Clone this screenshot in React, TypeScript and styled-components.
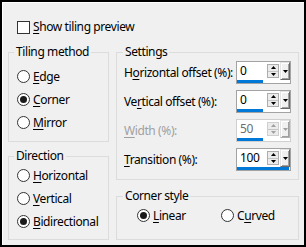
import React from 'react';
import styled, { createGlobalStyle } from 'styled-components';

const Global = createGlobalStyle`
  html, body { margin: 0; padding: 0; background: #f0f0f0; }
  #root { width: 306px; height: 247px; }
`;

const Window = styled.div`
  box-sizing: border-box;
  width: 306px;
  height: 247px;
  border: 2px solid #000;
  background: #f0f0f0;
  box-shadow: inset 1px 1px 0 #fff;
  padding: 17px 5px 0 6px;
  display: flex;
  flex-direction: column;
  gap: 9px;
  font-family: "Noto Sans", "Open Sans", sans-serif;
  font-size: 12px;
  line-height: 16px;
  letter-spacing: -0.4px;
  color: #000;
`;

const U = styled.span`
  text-decoration: underline;
  text-underline-offset: 2px;
  text-decoration-thickness: 1px;
`;

const CheckRow = styled.label`
  display: flex;
  align-items: center;
  gap: 3px;
  height: 16px;
  margin-left: 9px;
`;

const CheckBox = styled.span`
  box-sizing: border-box;
  width: 13px;
  height: 13px;
  border: 1px solid #333;
  background: #fff;
`;

const Columns = styled.div`
  display: flex;
  gap: 7px;
`;

const Column = styled.div<{ $w: number; $gap: number }>`
  width: ${(p) => p.$w}px;
  display: flex;
  flex-direction: column;
  gap: ${(p) => p.$gap}px;
`;

const Group = styled.fieldset<{ $h: number; $pt: number; $pl: number; $pr: number }>`
  box-sizing: border-box;
  margin: 0;
  min-width: 0;
  height: ${(p) => p.$h}px;
  border: 1px solid #dcdcdc;
  padding: ${(p) => p.$pt}px ${(p) => p.$pr}px 0 ${(p) => p.$pl}px;
  display: flex;
  flex-direction: column;
`;

const Legend = styled.legend`
  padding: 0 2px;
  line-height: 16px;
`;

const RadioRow = styled.label<{ $indent?: number; $w?: number }>`
  display: flex;
  align-items: center;
  gap: 3px;
  height: 23px;
  margin-left: ${(p) => p.$indent ?? 3}px;
  width: ${(p) => (p.$w ? `${p.$w}px` : 'auto')};
`;

const RadioCircle = styled.span<{ $checked?: boolean }>`
  box-sizing: border-box;
  width: 13px;
  height: 13px;
  border-radius: 50%;
  border: 1px solid #333;
  background: #fff;
  display: flex;
  align-items: center;
  justify-content: center;
  &::after {
    content: '';
    width: 7px;
    height: 7px;
    border-radius: 50%;
    background: #1a1a1a;
    display: ${(p) => (p.$checked ? 'block' : 'none')};
  }
`;

const OptionLine = styled.div`
  display: flex;
  align-items: center;
`;

const SettingRows = styled.div`
  display: flex;
  flex-direction: column;
  gap: 6px;
  margin-left: 1px;
`;

const SettingRow = styled.div`
  display: flex;
  align-items: center;
  justify-content: space-between;
  height: 23px;
`;

const SettingLabel = styled.span<{ $disabled?: boolean }>`
  color: ${(p) => (p.$disabled ? '#a0a0a0' : '#000')};
`;

const SpinField = styled.div<{ $disabled?: boolean }>`
  box-sizing: border-box;
  width: 55px;
  height: 23px;
  border: 1px solid ${(p) => (p.$disabled ? '#cfcfcf' : '#a3a3a3')};
  background: #fff;
  display: flex;
  flex-direction: column;
`;

const SpinTop = styled.div`
  display: flex;
  align-items: center;
  height: 18px;
`;

const SpinValue = styled.span<{ $disabled?: boolean }>`
  width: 30px;
  box-sizing: border-box;
  padding-left: 3px;
  color: ${(p) => (p.$disabled ? '#6d6d6d' : '#000')};
`;

const Arrows = styled.div<{ $disabled?: boolean }>`
  box-sizing: border-box;
  width: 12px;
  height: 14px;
  border: 1px solid ${(p) => (p.$disabled ? '#cfcfcf' : '#adadad')};
  background: #ececec;
  display: flex;
  flex-direction: column;
`;

const ArrowHalf = styled.div`
  flex: 1;
  display: flex;
  align-items: center;
  justify-content: center;
  & + & {
    border-top: 1px solid #c4c4c4;
  }
`;

const DropButton = styled.div<{ $disabled?: boolean }>`
  box-sizing: border-box;
  width: 10px;
  height: 18px;
  margin-left: 1px;
  background: #f0f0f0;
  border: 1px solid;
  border-color: #e3e3e3 ${(p) => (p.$disabled ? '#b0b0b0' : '#696969')}
    ${(p) => (p.$disabled ? '#b0b0b0' : '#696969')} #e3e3e3;
  box-shadow: inset 1px 1px 0 #fff, inset -1px -1px 0 #a0a0a0;
  display: flex;
  align-items: center;
  justify-content: center;
`;

const Track = styled.div`
  height: 3px;
  width: 52px;
`;

const Bar = styled.div`
  height: 100%;
  background: #0078d7;
`;

const Tri = ({ dir, color }: { dir: 'up' | 'down'; color: string }) => (
  <svg width="5" height="3" viewBox="0 0 5 3">
    <polygon points={dir === 'up' ? '2.5,0 5,3 0,3' : '0,0 5,0 2.5,3'} fill={color} />
  </svg>
);

type SpinProps = { value: string; fraction: number; disabled?: boolean };

const Spin = ({ value, fraction, disabled }: SpinProps) => {
  const c = disabled ? '#a0a0a0' : '#000';
  return (
    <SpinField $disabled={disabled}>
      <SpinTop>
        <SpinValue $disabled={disabled}>{value}</SpinValue>
        <Arrows $disabled={disabled}>
          <ArrowHalf>
            <Tri dir="up" color={c} />
          </ArrowHalf>
          <ArrowHalf>
            <Tri dir="down" color={c} />
          </ArrowHalf>
        </Arrows>
        <DropButton $disabled={disabled}>
          <Tri dir="down" color={c} />
        </DropButton>
      </SpinTop>
      <Track>
        <Bar style={{ width: `${fraction * 100}%` }} />
      </Track>
    </SpinField>
  );
};

type RadioProps = { checked?: boolean; pre?: string; mn: string; post: string; indent?: number; w?: number };

const Radio = ({ checked, pre = '', mn, post, indent, w }: RadioProps) => (
  <RadioRow $indent={indent} $w={w}>
    <RadioCircle $checked={checked} />
    <span>
      {pre}
      <U>{mn}</U>
      {post}
    </span>
  </RadioRow>
);

export default function App() {
  return (
    <>
      <Global />
      <Window>
        <CheckRow>
          <CheckBox />
          <span>
            <U>S</U>how tiling preview
          </span>
        </CheckRow>
        <Columns>
          <Column $w={101} $gap={6}>
            <Group $h={98} $pt={5} $pl={5} $pr={4}>
              <Legend>Tiling method</Legend>
              <Radio mn="E" post="dge" />
              <Radio checked mn="C" post="orner" />
              <Radio mn="M" post="irror" />
            </Group>
            <Group $h={92} $pt={0} $pl={5} $pr={4}>
              <Legend>Direction</Legend>
              <Radio mn="H" post="orizontal" />
              <Radio mn="V" post="ertical" />
              <Radio checked mn="B" post="idirectional" />
            </Group>
          </Column>
          <Column $w={183} $gap={8}>
            <Group $h={136} $pt={1} $pl={6} $pr={7}>
              <Legend>Settings</Legend>
              <SettingRows>
                <SettingRow>
                  <SettingLabel>
                    H<U>o</U>rizontal offset (%):
                  </SettingLabel>
                  <Spin value="0" fraction={0.5} />
                </SettingRow>
                <SettingRow>
                  <SettingLabel>
                    Ve<U>r</U>tical offset (%):
                  </SettingLabel>
                  <Spin value="0" fraction={0.5} />
                </SettingRow>
                <SettingRow>
                  <SettingLabel $disabled>
                    <U>W</U>idth (%):
                  </SettingLabel>
                  <Spin value="50" fraction={0.5} disabled />
                </SettingRow>
                <SettingRow>
                  <SettingLabel>
                    <U>T</U>ransition (%):
                  </SettingLabel>
                  <Spin value="100" fraction={1} />
                </SettingRow>
              </SettingRows>
            </Group>
            <Group $h={52} $pt={0} $pl={6} $pr={7}>
              <Legend>Corner style</Legend>
              <OptionLine>
                <Radio checked mn="L" post="inear" indent={14} w={84} />
                <Radio pre="C" mn="u" post="rved" indent={0} />
              </OptionLine>
            </Group>
          </Column>
        </Columns>
      </Window>
    </>
  );
}
